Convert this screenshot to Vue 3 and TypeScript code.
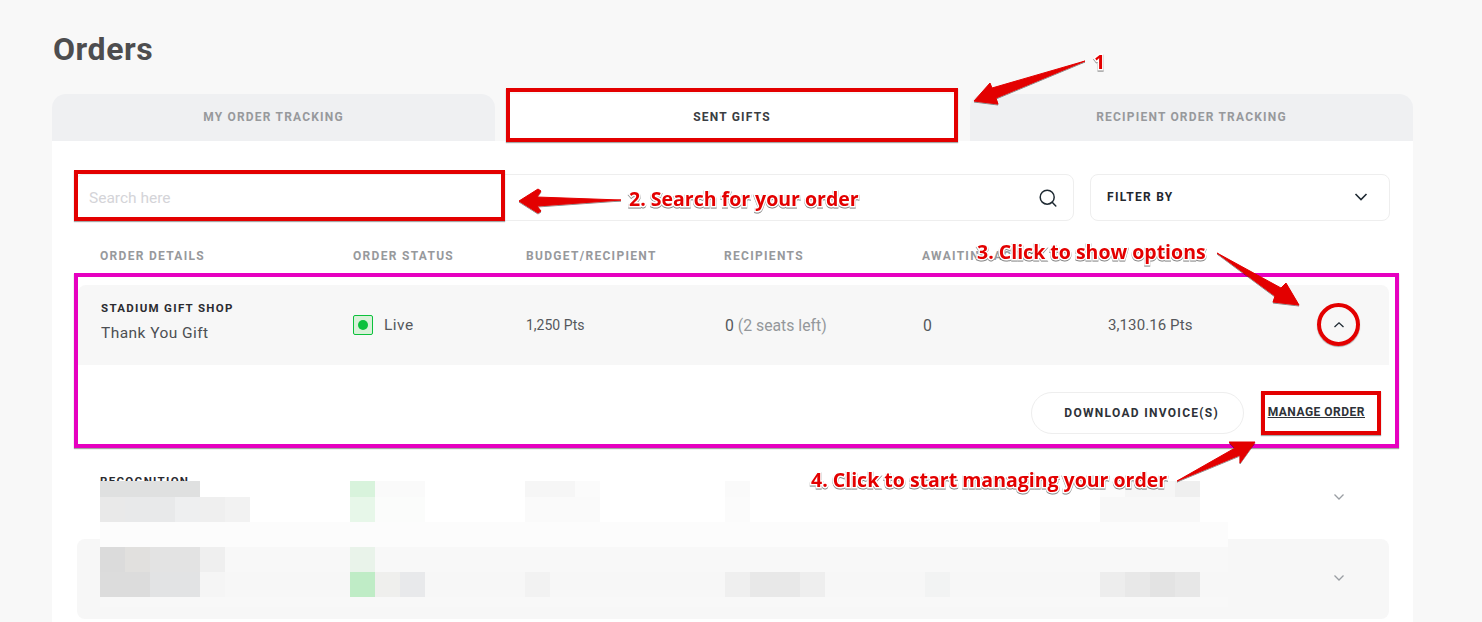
<script setup lang="ts">
interface Strip {
  height: number
  cells: [number, string][]
}

const tabs = [
  { label: 'My Order Tracking', active: false },
  { label: 'Sent Gifts', active: true },
  { label: 'Recipient Order Tracking', active: false },
]

const columns = ['Order Details', 'Order Status', 'Budget/Recipient', 'Recipients', 'Awaiting Action', '']

// pixelated (redacted) part of the screenshot, each cell is [width, colour]
const strips: Strip[] = [
  {
    height: 16,
    cells: [
      [100, '#dfe0e0'], [150, 'transparent'], [25, '#d8f3dc'], [50, '#fafafa'], [100, 'transparent'],
      [50, '#f6f6f6'], [25, '#fbfbfb'], [125, 'transparent'], [25, '#fafafa'], [350, 'transparent'],
      [25, '#fbfbfb'], [50, '#f6f6f6'], [25, '#efefef'],
    ],
  },
  {
    height: 25,
    cells: [
      [25, '#e9e9e9'], [50, '#e8e9ea'], [25, '#eeeff0'], [25, '#efefef'], [25, '#f2f2f2'], [100, 'transparent'],
      [25, '#e7f7e9'], [50, '#fbfcfb'], [100, 'transparent'], [75, '#fafafa'], [125, 'transparent'],
      [25, '#fbfbfb'], [350, 'transparent'], [100, '#f8f8f8'],
    ],
  },
  {
    height: 25,
    cells: [[1128, '#fcfcfc']],
  },
  {
    height: 25,
    cells: [
      [25, '#dbdbdb'], [25, '#e1e0de'], [50, '#e3e3e3'], [25, '#efefef'], [125, '#f8f8f8'],
      [25, '#e9f3ea'], [853, '#f8f8f8'],
    ],
  },
  {
    height: 25,
    cells: [
      [50, '#dcdcdc'], [50, '#e2e3e4'], [25, '#f5f5f5'], [125, 'transparent'], [25, '#bfecc6'], [25, '#efefed'],
      [25, '#e8e9eb'], [100, 'transparent'], [25, '#f2f2f2'], [175, 'transparent'], [25, '#efefef'], [50, '#e8e8e8'],
      [25, '#eeeeee'], [100, 'transparent'], [25, '#f2f3f3'], [150, 'transparent'], [25, '#ededed'], [25, '#e8e8e8'],
      [25, '#e3e3e3'], [25, '#e7e7e7'],
    ],
  },
  {
    height: 10,
    cells: [[1128, '#f8f8f8']],
  },
]
</script>

<template>
  <main class="page">
    <h1 class="title">Orders</h1>

    <div class="tabs">
      <div v-for="tab in tabs" :key="tab.label" class="tab" :class="{ active: tab.active }">{{ tab.label }}</div>
    </div>

    <section class="panel">
      <div class="filters">
        <div class="search">
          <span class="placeholder">Search here</span>
          <svg width="20" height="20" viewBox="0 0 20 20" fill="none" stroke="#1f2a33" stroke-width="1.5">
            <circle cx="9.2" cy="9.2" r="7" />
            <path d="M14.2 14.2 17.8 18" stroke-linecap="round" />
          </svg>
        </div>
        <div class="filter">
          <span>Filter By</span>
          <svg width="14" height="8" viewBox="0 0 14 8" fill="none" stroke="#1f2a33" stroke-width="1.6">
            <path d="M1.5 1 7 6.5 12.5 1" />
          </svg>
        </div>
      </div>

      <div class="grid head">
        <span v-for="col in columns" :key="col">{{ col }}</span>
      </div>

      <div class="grid row tinted">
        <div class="details">
          <div class="shop">Stadium Gift Shop</div>
          <div class="gift">Thank You Gift</div>
        </div>
        <div class="status">
          <span class="status-box"><i></i></span>
          Live
        </div>
        <div class="budget">1,250 Pts</div>
        <div class="seats">0 <span class="muted">(2 seats left)</span></div>
        <div class="seats">0</div>
        <div class="total">3,130.16 Pts</div>
        <svg class="chevron" width="12" height="8" viewBox="0 0 12 8" fill="none" stroke="#1f2a33" stroke-width="1.3">
          <path d="M1.5 6 6 1.8 10.5 6" />
        </svg>
      </div>

      <div class="actions">
        <button class="invoice">Download Invoice(s)</button>
        <a class="manage">Manage Order</a>
      </div>

      <div class="grid row plain">
        <div class="shop">Recognition</div>
        <svg class="chevron faint" width="12" height="8" viewBox="0 0 12 8" fill="none" stroke="#9a9ea3" stroke-width="1.3">
          <path d="M1.5 1.5 6 6 10.5 1.5" />
        </svg>
      </div>

      <div class="grid row tinted last">
        <svg class="chevron faint" width="12" height="8" viewBox="0 0 12 8" fill="none" stroke="#9a9ea3" stroke-width="1.3">
          <path d="M1.5 1.5 6 6 10.5 1.5" />
        </svg>
      </div>
    </section>

    <!-- redacted pixels on top of the last two rows -->
    <div class="mosaic">
      <div v-for="(strip, i) in strips" :key="i" class="strip" :style="{ height: strip.height + 'px' }">
        <span
          v-for="(cell, j) in strip.cells"
          :key="j"
          :style="{ width: cell[0] + 'px', background: cell[1] }"
        ></span>
      </div>
    </div>

    <!-- tutorial annotations drawn over the screenshot -->
    <div class="frame box-tab"></div>
    <div class="frame box-search"></div>
    <div class="frame box-manage"></div>
    <div class="frame box-row"></div>
    <div class="frame box-chevron"></div>

    <svg class="arrows" width="1482" height="622" viewBox="0 0 1482 622">
      <defs>
        <filter id="drop" x="-10%" y="-10%" width="120%" height="130%">
          <feDropShadow dx="0" dy="1" stdDeviation="0.6" flood-color="#000" flood-opacity="0.45" />
        </filter>
      </defs>
      <g fill="#e30000" stroke="#e30000" stroke-width="1" stroke-linejoin="round" filter="url(#drop)">
        <path d="M1085 61 992 88 990 83 974 101 998 104 996 98Z" />
        <path d="M621 200 537 197 541 191 538 189 519 201 538 213 541 211 537 206Z" />
        <path d="M1217 253 1281 288 1286 283 1299 305 1273 302 1275 296Z" />
        <path d="M1177 481 1235 448 1229 442 1255 442 1240 463 1240 455Z" />
      </g>
    </svg>

    <span class="note note-1">1</span>
    <span class="note note-2">2. Search for your order</span>
    <span class="note note-3">3. Click to show options</span>
    <span class="note note-4">4. Click to start managing your order</span>
  </main>
</template>

<style scoped>
.page {
  position: relative;
  width: 1482px;
  height: 622px;
  overflow: hidden;
  box-sizing: border-box;
  padding: 29px 69px 0 52px;
  background: #f8f8f8;
  font-family: Roboto, "Noto Sans", sans-serif;
  color: #4a4d50;
}

.title {
  margin: 0 0 25px 1px;
  font-size: 32px;
  line-height: 40px;
  font-weight: 700;
  letter-spacing: 0.55px;
  color: #4d4d4f;
}

.tabs {
  display: flex;
  height: 47px;
}

.tab {
  box-sizing: border-box;
  flex: 0 0 443px;
  display: flex;
  align-items: center;
  justify-content: center;
  padding-bottom: 1px;
  background: #eff0f2;
  border-radius: 14px 14px 0 0;
  font-size: 12px;
  font-weight: 700;
  letter-spacing: 1.2px;
  text-transform: uppercase;
  color: #97999c;
}

.tab.active {
  flex: 1;
  background: #fff;
  border-radius: 0;
  color: #3a3d42;
  margin: 0 12px 0 11px;
}

.panel {
  height: 500px;
  padding: 33px 23px 0;
  background: #fff;
}

.filters {
  display: flex;
  gap: 16px;
  height: 47px;
}

.search,
.filter {
  box-sizing: border-box;
  display: flex;
  align-items: center;
  justify-content: space-between;
  border: 1px solid #eeeeee;
  border-radius: 8px;
}

.search {
  flex: 1;
  padding: 0 15px 0 13px;
}

.placeholder {
  font-size: 15.5px;
  color: #d4d4d8;
}

.filter {
  width: 300px;
  padding: 0 21px 1px 16px;
  font-size: 12px;
  font-weight: 700;
  letter-spacing: 1.3px;
  text-transform: uppercase;
  color: #23272e;
}

.grid {
  display: grid;
  grid-template-columns: 253px 173px 198px 198px 185px 1fr;
  align-items: center;
}

.head {
  height: 17px;
  margin-top: 26px;
  padding-left: 25px;
  font-size: 12px;
  font-weight: 700;
  letter-spacing: 1.3px;
  text-transform: uppercase;
  color: #97999c;
}

.row {
  position: relative;
  height: 80px;
  margin: 0 1px 0 3px;
  padding-left: 22px;
  border-radius: 8px;
  font-size: 15px;
  color: #55585c;
}

.tinted {
  background: #f7f7f7;
}

.head + .tinted {
  margin-top: 21px;
  border-radius: 8px 8px 0 0;
}

.plain {
  margin-top: 24px;
}

.last {
  margin-top: 1px;
  margin-left: 2px;
  padding-left: 23px;
}

.details {
  margin-left: 1px;
  padding-bottom: 8px;
}

.shop {
  font-size: 11.5px;
  font-weight: 700;
  letter-spacing: 1.3px;
  text-transform: uppercase;
  color: #2b2b30;
}

.plain .shop {
  transform: translateY(-17px);
}

.gift {
  margin-top: 9px;
  font-size: 15.5px;
  letter-spacing: 0.45px;
  color: #4c4f53;
}

.status {
  display: flex;
  align-items: center;
  gap: 11px;
  font-size: 15.5px;
  letter-spacing: 0.5px;
}

.status-box {
  box-sizing: border-box;
  display: flex;
  align-items: center;
  justify-content: center;
  width: 20px;
  height: 20px;
  border: 1px solid #0cc13c;
  border-radius: 2px;
  background: #d9f1d9;
}

.status-box i {
  width: 10px;
  height: 10px;
  border-radius: 50%;
  background: #0cc13c;
}

.budget {
  font-size: 14px;
}

.seats {
  margin-left: 1px;
  font-size: 15.8px;
}

.muted {
  color: #94979b;
}

.total {
  margin-left: 1px;
  letter-spacing: 0.1px;
}

.chevron {
  position: absolute;
  right: 44px;
  top: 36px;
}

.chevron.faint {
  top: 35px;
}

.actions {
  box-sizing: border-box;
  display: flex;
  justify-content: flex-end;
  align-items: flex-start;
  gap: 24px;
  height: 69px;
  padding: 27px 25px 0 0;
}

.invoice {
  width: 213px;
  height: 42px;
  padding: 0 0 0 9px;
  border: 1px solid #eeeeee;
  border-radius: 21px;
  background: #fff;
  font-family: inherit;
  font-size: 12px;
  font-weight: 700;
  letter-spacing: 1.3px;
  text-transform: uppercase;
  color: #2e3238;
}

.manage {
  margin-top: 13px;
  font-size: 12px;
  font-weight: 700;
  letter-spacing: 0.5px;
  text-transform: uppercase;
  text-decoration: underline;
  color: #2e3238;
}

.mosaic {
  position: absolute;
  left: 100px;
  top: 481px;
  width: 1128px;
}

.strip {
  display: flex;
}

.strip span {
  flex: none;
  height: 100%;
}

.frame {
  position: absolute;
  box-sizing: border-box;
  border: 4px solid #e30000;
  box-shadow: 0 1px 1px rgba(0, 0, 0, 0.35);
}

.box-tab {
  left: 506px;
  top: 88px;
  width: 452px;
  height: 54px;
}

.box-search {
  left: 74px;
  top: 170px;
  width: 431px;
  height: 51px;
}

.box-manage {
  left: 1261px;
  top: 391px;
  width: 120px;
  height: 44px;
}

.box-row {
  left: 74px;
  top: 273px;
  width: 1325px;
  height: 175px;
  border-color: #e600c0;
}

.box-chevron {
  left: 1317px;
  top: 303px;
  width: 43px;
  height: 43px;
  border-radius: 50%;
}

.arrows {
  position: absolute;
  left: 0;
  top: 0;
  pointer-events: none;
}

.note {
  position: absolute;
  font-family: "Open Sans", sans-serif;
  font-weight: 700;
  font-size: 19.5px;
  line-height: 24px;
  white-space: nowrap;
  color: #e30000;
  -webkit-text-stroke: 3px #fff;
  paint-order: stroke fill;
  filter: drop-shadow(0 1px 0.6px rgba(0, 0, 0, 0.5));
}

.note-1 {
  left: 1094px;
  top: 50px;
}

.note-2 {
  left: 629px;
  top: 187px;
}

.note-3 {
  left: 977px;
  top: 240px;
}

.note-4 {
  left: 811px;
  top: 468px;
}
</style>
